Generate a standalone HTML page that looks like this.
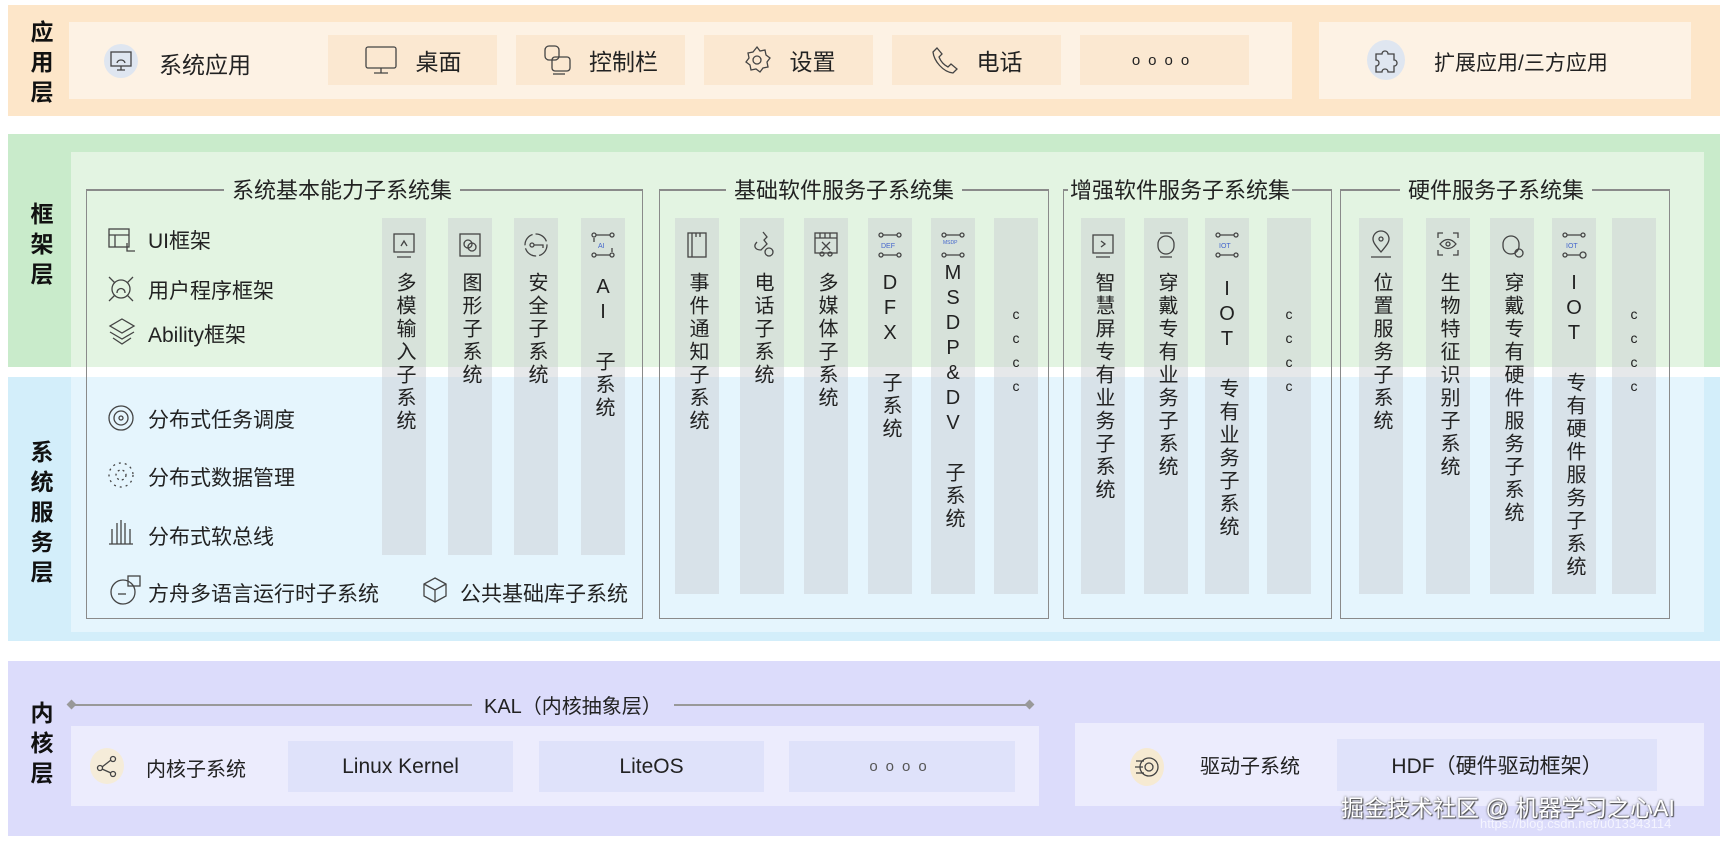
<!DOCTYPE html>
<html><head><meta charset="utf-8"><style>
*{margin:0;padding:0;box-sizing:border-box}
body{width:1724px;height:842px;background:#fff;position:relative;overflow:hidden;font-family:"Liberation Sans","Noto Sans CJK SC",sans-serif;color:#222}
.a{position:absolute}
.lbl{position:absolute;font-weight:bold;font-size:23px;line-height:30px;width:30px;text-align:center;color:#111}
.box{position:absolute}
.it{position:absolute;display:flex;align-items:center;justify-content:center;font-size:22px;color:#222}
.col{position:absolute;background:rgba(200,205,208,0.45);width:44px}
.vt{position:absolute;left:0;width:100%;top:54px;writing-mode:vertical-rl;text-orientation:upright;font-size:20px;letter-spacing:3px;line-height:44px;color:#222;white-space:nowrap}
.ic{position:absolute;left:9px;top:12px;width:26px;height:30px}
.gt{position:absolute;font-size:22px;padding:0 8px;color:#222;white-space:nowrap}
.gb{position:absolute;border:1.5px solid #8a8a8a;border-top:none}
.ln{position:absolute;height:1.5px;background:#8a8a8a}
.li{position:absolute;font-size:21px;color:#222;white-space:nowrap}
svg{stroke:#444;fill:none;stroke-width:1.3}
</style></head><body>
<div class="box" style="left:8px;top:5px;width:1712px;height:111px;background:#fde6c9"></div>
<div class="lbl" style="left:27px;top:17px">应<br>用<br>层</div>
<div class="box" style="left:69px;top:22px;width:1223px;height:77px;background:#fdf2e4"></div>
<div class="box" style="left:1319px;top:22px;width:372px;height:77px;background:#fdf2e4"></div>
<div class="a" style="left:104px;top:44px;width:34px;height:34px;border-radius:50%;background:#dfe6f0"></div>
<svg class="a" style="left:109px;top:50px" width="24" height="22"><rect x="2" y="2" width="20" height="14"/><path d="M8 20h8M12 16v4M8 13c1-4 7-4 8 0"/></svg>
<div class="li" style="left:159px;top:46px;font-size:23px">系统应用</div>
<div class="it" style="left:328px;top:35px;width:169px;height:50px;background:#fbe8d1;font-size:23px"><svg width="34" height="30" style="margin-right:18px"><rect x="2" y="2" width="30" height="21" rx="2"/><path d="M10 28h14M17 23v5"/></svg>桌面</div>
<div class="it" style="left:516px;top:35px;width:169px;height:50px;background:#fbe8d1;font-size:23px"><svg width="30" height="32" style="margin-right:16px"><rect x="2" y="2" width="14" height="14" rx="4"/><rect x="9" y="13" width="18" height="14" rx="3"/><path d="M10 30h12"/></svg>控制栏</div>
<div class="it" style="left:704px;top:35px;width:169px;height:50px;background:#fbe8d1;font-size:23px"><svg width="30" height="30" style="margin-right:18px"><circle cx="15" cy="15" r="4"/><path d="M15 2l3 4 5-1 1 5 4 3-3 4 1 5-5 1-3 4-4-3-5 1-1-5-4-3 3-4-1-5 5-1z"/></svg>设置</div>
<div class="it" style="left:892px;top:35px;width:169px;height:50px;background:#fbe8d1;font-size:23px"><svg width="28" height="30" style="margin-right:18px"><path d="M6 3l5 6-3 3c2 5 5 8 9 10l3-3 6 5-4 4C12 27 3 16 2 7z"/></svg>电话</div>
<div class="it" style="left:1080px;top:35px;width:169px;height:50px;background:#fbe8d1;font-size:15px;letter-spacing:8px">oooo</div>
<div class="a" style="left:1367px;top:40px;width:38px;height:40px;border-radius:50%;background:#dfe6f0"></div>
<svg class="a" style="left:1372px;top:46px" width="28" height="28"><path d="M4 8h6c0-4 6-4 6 0h6v6c4 0 4 6 0 6v6h-6c0-4-6-4-6 0H4v-6c4 0 4-6 0-6z"/></svg>
<div class="li" style="left:1434px;top:47px;font-size:21px">扩展应用/三方应用</div>

<div class="box" style="left:8px;top:134px;width:1712px;height:233px;background:#c9ebcb"></div>
<div class="box" style="left:8px;top:377px;width:1712px;height:264px;background:#d3eefa"></div>
<div class="box" style="left:71px;top:152px;width:1633px;height:215px;background:#e3f4e2"></div>
<div class="box" style="left:71px;top:377px;width:1633px;height:255px;background:#e5f5fd"></div>
<div class="lbl" style="left:27px;top:199px">框<br>架<br>层</div>
<div class="lbl" style="left:27px;top:437px">系<br>统<br>服<br>务<br>层</div>

<div class="gb" style="left:86px;top:189px;width:557px;height:430px"></div>
<div class="gb" style="left:659px;top:189px;width:390px;height:430px"></div>
<div class="gb" style="left:1063px;top:189px;width:269px;height:430px"></div>
<div class="gb" style="left:1340px;top:189px;width:330px;height:430px"></div>
<div class="ln" style="left:86px;top:189px;width:557px"></div>
<div class="ln" style="left:659px;top:189px;width:390px"></div>
<div class="ln" style="left:1063px;top:189px;width:269px"></div>
<div class="ln" style="left:1340px;top:189px;width:330px"></div>
<div class="gt" style="left:224px;top:173px;background:#e3f4e2">系统基本能力子系统集</div>
<div class="gt" style="left:726px;top:173px;background:#e3f4e2">基础软件服务子系统集</div>
<div class="gt" style="left:1068px;top:173px;background:#e3f4e2;padding:0 2px">增强软件服务子系统集</div>
<div class="gt" style="left:1400px;top:173px;background:#e3f4e2">硬件服务子系统集</div>

<svg class="a" style="left:107px;top:227px" width="30" height="26"><rect x="2" y="2" width="20" height="18"/><path d="M2 8h20M8 8v12M20 16v8h8"/></svg>
<div class="li" style="left:148px;top:225px">UI框架</div>
<svg class="a" style="left:105px;top:273px" width="32" height="32"><circle cx="16" cy="16" r="9"/><path d="M4 4l6 6M28 4l-6 6M4 28l6-6M28 28l-6-6M12 20c0-6 8-6 8 0"/></svg>
<div class="li" style="left:148px;top:275px">用户程序框架</div>
<svg class="a" style="left:107px;top:316px" width="30" height="32"><path d="M15 3l12 7-12 7-12-7z M3 16l12 7 12-7 M6 22l9 6 9-6"/></svg>
<div class="li" style="left:148px;top:319px">Ability框架</div>
<svg class="a" style="left:106px;top:403px" width="30" height="30"><circle cx="15" cy="15" r="12"/><circle cx="15" cy="15" r="7"/><circle cx="15" cy="15" r="2"/></svg>
<div class="li" style="left:148px;top:404px">分布式任务调度</div>
<svg class="a" style="left:106px;top:460px" width="30" height="30"><circle cx="15" cy="15" r="12" stroke-dasharray="2 4"/><circle cx="15" cy="15" r="5" stroke-dasharray="2 3"/></svg>
<div class="li" style="left:148px;top:462px">分布式数据管理</div>
<svg class="a" style="left:106px;top:517px" width="30" height="30"><path d="M3 27h24M6 27V12M11 27V6M15 27V3M19 27V6M24 27V12"/></svg>
<div class="li" style="left:148px;top:521px">分布式软总线</div>
<svg class="a" style="left:108px;top:574px" width="34" height="34"><circle cx="15" cy="18" r="12"/><rect x="20" y="2" width="12" height="10"/><path d="M10 20h8"/></svg>
<div class="li" style="left:148px;top:578px">方舟多语言运行时子系统</div>
<svg class="a" style="left:420px;top:575px" width="30" height="30"><path d="M15 3l11 6v12l-11 6-11-6V9z M4 9l11 6 11-6 M15 15v12"/></svg>
<div class="li" style="left:460px;top:578px">公共基础库子系统</div>

<div class="col" style="left:382px;top:218px;height:337px"><svg class="ic"><rect x="3" y="4" width="20" height="18"/><path d="M6 27h14M10 16l3-5 3 5"/></svg><div class="vt">多模输入子系统</div></div>
<div class="col" style="left:448px;top:218px;height:337px"><svg class="ic"><rect x="3" y="4" width="20" height="22"/><circle cx="11" cy="14" r="4"/><circle cx="15" cy="17" r="4"/></svg><div class="vt">图形子系统</div></div>
<div class="col" style="left:514px;top:218px;height:337px"><svg class="ic"><circle cx="13" cy="15" r="11" stroke-dasharray="14 3"/><circle cx="9" cy="15" r="2"/><path d="M11 15h9v3"/></svg><div class="vt">安全子系统</div></div>
<div class="col" style="left:581px;top:218px;height:337px"><svg class="ic"><circle cx="4" cy="5" r="2"/><circle cx="22" cy="5" r="2"/><circle cx="4" cy="25" r="2"/><circle cx="22" cy="25" r="2"/><path d="M6 5h14M6 25h14M4 8v4M22 18v4"/><text x="8" y="18" font-size="7" fill="#46c" stroke="none">AI</text></svg><div class="vt" style="top:58px">AI 子系统</div></div>
<div class="col" style="left:675px;top:218px;height:376px"><svg class="ic"><rect x="4" y="3" width="18" height="24"/><path d="M8 3v24M12 3v4M16 3v4"/></svg><div class="vt">事件通知子系统</div></div>
<div class="col" style="left:740px;top:218px;height:376px"><svg class="ic"><path d="M14 2l4 5-3 3 3 4-6 6C6 20 4 16 8 12"/><circle cx="20" cy="22" r="4"/></svg><div class="vt">电话子系统</div></div>
<div class="col" style="left:804px;top:218px;height:376px"><svg class="ic"><rect x="2" y="3" width="22" height="20"/><path d="M2 8h22M7 3v5M12 3v5M17 3v5M9 12l8 8M17 12l-8 8"/><circle cx="9" cy="24" r="2"/><circle cx="17" cy="24" r="2"/></svg><div class="vt">多媒体子系统</div></div>
<div class="col" style="left:868px;top:218px;height:376px"><svg class="ic"><circle cx="4" cy="5" r="2"/><circle cx="22" cy="5" r="2"/><circle cx="4" cy="25" r="2"/><circle cx="22" cy="25" r="2"/><path d="M6 5h14M6 25h14"/><text x="4" y="18" font-size="7" fill="#46c" stroke="none">DEF</text></svg><div class="vt">DFX 子系统</div></div>
<div class="col" style="left:931px;top:218px;height:376px"><svg class="ic"><circle cx="4" cy="5" r="2"/><circle cx="22" cy="5" r="2"/><circle cx="4" cy="25" r="2"/><circle cx="22" cy="25" r="2"/><path d="M6 5h14M6 25h14"/><text x="3" y="14" font-size="5" fill="#46c" stroke="none">MSDP</text></svg><div class="vt" style="top:44px">MSDP&amp;DV 子系统</div></div>
<div class="col" style="left:994px;top:218px;height:376px"><div class="vt" style="top:88px;font-size:14px;letter-spacing:8px">cccc</div></div>
<div class="col" style="left:1081px;top:218px;height:376px"><svg class="ic"><rect x="3" y="5" width="20" height="18"/><path d="M6 27h14M11 11l4 3-4 3"/></svg><div class="vt">智慧屏专有业务子系统</div></div>
<div class="col" style="left:1144px;top:218px;height:376px"><svg class="ic"><rect x="5" y="6" width="16" height="18" rx="8"/><path d="M7 3h12M7 27h12"/></svg><div class="vt">穿戴专有业务子系统</div></div>
<div class="col" style="left:1205px;top:218px;height:376px"><svg class="ic"><circle cx="4" cy="5" r="2"/><circle cx="22" cy="5" r="2"/><circle cx="4" cy="25" r="2"/><circle cx="22" cy="25" r="2"/><path d="M6 5h14M6 25h14"/><text x="5" y="18" font-size="7" fill="#46c" stroke="none">IOT</text></svg><div class="vt" style="top:60px">IOT 专有业务子系统</div></div>
<div class="col" style="left:1267px;top:218px;height:376px"><div class="vt" style="top:88px;font-size:14px;letter-spacing:8px">cccc</div></div>
<div class="col" style="left:1359px;top:218px;height:376px"><svg class="ic"><path d="M13 22c-6-7-8-10-8-13a8 8 0 0 1 16 0c0 3-2 6-8 13z M3 27h20"/><circle cx="13" cy="9" r="2"/></svg><div class="vt">位置服务子系统</div></div>
<div class="col" style="left:1426px;top:218px;height:376px"><svg class="ic"><path d="M3 8V3h5M18 3h5v5M3 20v5h5M18 25h5v-5M5 14c5-6 11-6 16 0-5 6-11 6-16 0z"/><circle cx="13" cy="14" r="2"/></svg><div class="vt">生物特征识别子系统</div></div>
<div class="col" style="left:1490px;top:218px;height:376px"><svg class="ic"><rect x="4" y="6" width="16" height="18" rx="8"/><circle cx="20" cy="23" r="4"/></svg><div class="vt">穿戴专有硬件服务子系统</div></div>
<div class="col" style="left:1552px;top:218px;height:376px"><svg class="ic"><circle cx="4" cy="5" r="2"/><circle cx="22" cy="5" r="2"/><circle cx="4" cy="25" r="2"/><circle cx="22" cy="25" r="3"/><path d="M6 5h14M6 25h13"/><text x="5" y="18" font-size="7" fill="#46c" stroke="none">IOT</text></svg><div class="vt" style="top:54px">IOT 专有硬件服务子系统</div></div>
<div class="col" style="left:1612px;top:218px;height:376px"><div class="vt" style="top:88px;font-size:14px;letter-spacing:8px">cccc</div></div>

<div class="box" style="left:8px;top:661px;width:1712px;height:175px;background:#dcdcfb"></div>
<div class="lbl" style="left:27px;top:698px">内<br>核<br>层</div>
<div class="a" style="left:71px;top:704px;width:959px;height:1.5px;background:#999"></div>
<div class="a" style="left:68px;top:701px;width:7px;height:7px;background:#999;transform:rotate(45deg)"></div>
<div class="a" style="left:1026px;top:701px;width:7px;height:7px;background:#999;transform:rotate(45deg)"></div>
<div class="a" style="left:472px;top:690px;background:#dcdcfb;padding:0 12px;font-size:20px">KAL（内核抽象层）</div>
<div class="box" style="left:71px;top:726px;width:968px;height:80px;background:#ececfd"></div>
<div class="box" style="left:1075px;top:723px;width:629px;height:83px;background:#ececfd"></div>
<div class="a" style="left:90px;top:748px;width:34px;height:36px;border-radius:50%;background:#f5ecd9"></div>
<svg class="a" style="left:95px;top:754px" width="24" height="24"><circle cx="5" cy="14" r="2.5"/><circle cx="18" cy="5" r="2.5"/><circle cx="18" cy="20" r="2.5"/><path d="M7 13l9-7M7 15l9 4"/></svg>
<div class="li" style="left:146px;top:753px;font-size:20px">内核子系统</div>
<div class="it" style="left:288px;top:741px;width:225px;height:51px;background:#dfe2fa;font-size:21px">Linux Kernel</div>
<div class="it" style="left:539px;top:741px;width:225px;height:51px;background:#dfe2fa;font-size:21px">LiteOS</div>
<div class="it" style="left:789px;top:741px;width:226px;height:51px;background:#dfe2fa;font-size:15px;letter-spacing:8px;color:#555">oooo</div>
<div class="a" style="left:1130px;top:748px;width:34px;height:38px;border-radius:50%;background:#f6ead2"></div>
<svg class="a" style="left:1133px;top:752px" width="28" height="30"><circle cx="16" cy="15" r="9"/><circle cx="16" cy="15" r="4"/><path d="M3 9h8M2 15h8M3 21h8"/></svg>
<div class="li" style="left:1200px;top:750px;font-size:20px">驱动子系统</div>
<div class="it" style="left:1337px;top:739px;width:320px;height:52px;background:#dfe2fa;font-size:21px">HDF（硬件驱动框架）</div>
<div class="a" style="left:1341px;top:789px;font-size:23px;color:#fff;text-shadow:0 0 2px #555,1px 1px 1px #444;white-space:nowrap">掘金技术社区 @ 机器学习之心AI</div>
<div class="a" style="left:1480px;top:816px;font-size:13px;color:#f4f4ff;white-space:nowrap">https://blog.csdn.net/u013343114</div>
</body></html>
